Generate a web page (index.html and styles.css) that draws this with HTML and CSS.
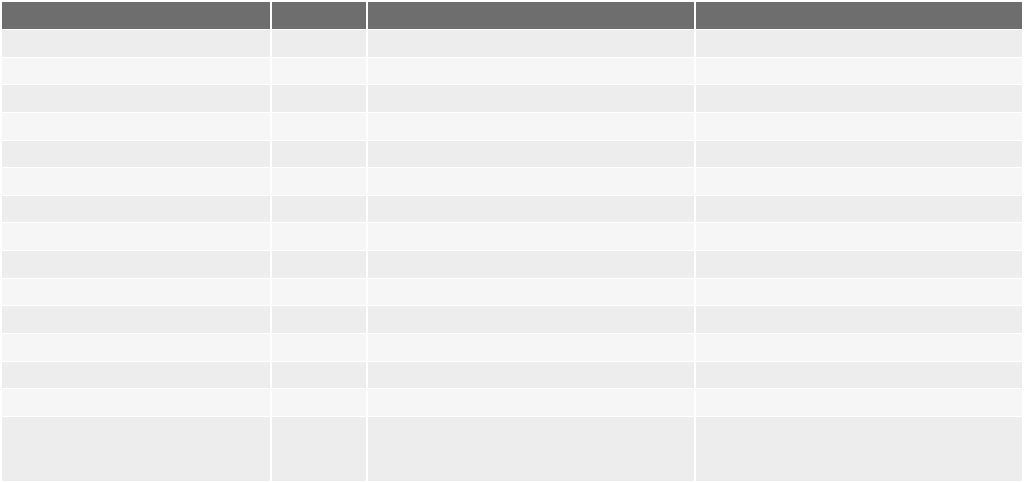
FILE: index.html
```html
<!DOCTYPE html>
<html lang="en">
<head>
<meta charset="utf-8">
<title>Table</title>
<link rel="stylesheet" href="styles.css">
</head>
<body>
<table class="grid">
  <colgroup>
    <col class="c1"><col class="c2"><col class="c3"><col class="c4">
  </colgroup>
  <thead>
    <tr class="head"><th></th><th></th><th></th><th></th></tr>
  </thead>
  <tbody>
    <tr class="row odd"><td></td><td></td><td></td><td></td></tr>
    <tr class="row even"><td></td><td></td><td></td><td></td></tr>
    <tr class="row odd"><td></td><td></td><td></td><td></td></tr>
    <tr class="row even"><td></td><td></td><td></td><td></td></tr>
    <tr class="row odd"><td></td><td></td><td></td><td></td></tr>
    <tr class="row even"><td></td><td></td><td></td><td></td></tr>
    <tr class="row odd"><td></td><td></td><td></td><td></td></tr>
    <tr class="row even"><td></td><td></td><td></td><td></td></tr>
    <tr class="row odd"><td></td><td></td><td></td><td></td></tr>
    <tr class="row even"><td></td><td></td><td></td><td></td></tr>
    <tr class="row odd"><td></td><td></td><td></td><td></td></tr>
    <tr class="row even"><td></td><td></td><td></td><td></td></tr>
    <tr class="row odd"><td></td><td></td><td></td><td></td></tr>
    <tr class="row even"><td></td><td></td><td></td><td></td></tr>
    <tr class="row odd tall"><td></td><td></td><td></td><td></td></tr>
  </tbody>
</table>
</body>
</html>
```
FILE: styles.css
```css
html, body {
  margin: 0;
  padding: 0;
  background: #ffffff;
  font-family: "Liberation Sans", Arial, sans-serif;
}
.grid {
  margin: 1px 0 0 0;
  border-collapse: separate;
  border-spacing: 2px 1px;
  width: 1024px;
  table-layout: fixed;
}
.c1 { width: 268px; }
.c2 { width: 94px; }
.c3 { width: 326px; }
.c4 { width: 326px; }
.grid th, .grid td {
  padding: 0;
}
.head th {
  background: #6e6e6e;
  height: 27px;
}
.row td {
  height: 26.64px;
}
.odd td { background: #ededed; }
.even td { background: #f6f6f6; }
.tall td { height: 64px; }
```
